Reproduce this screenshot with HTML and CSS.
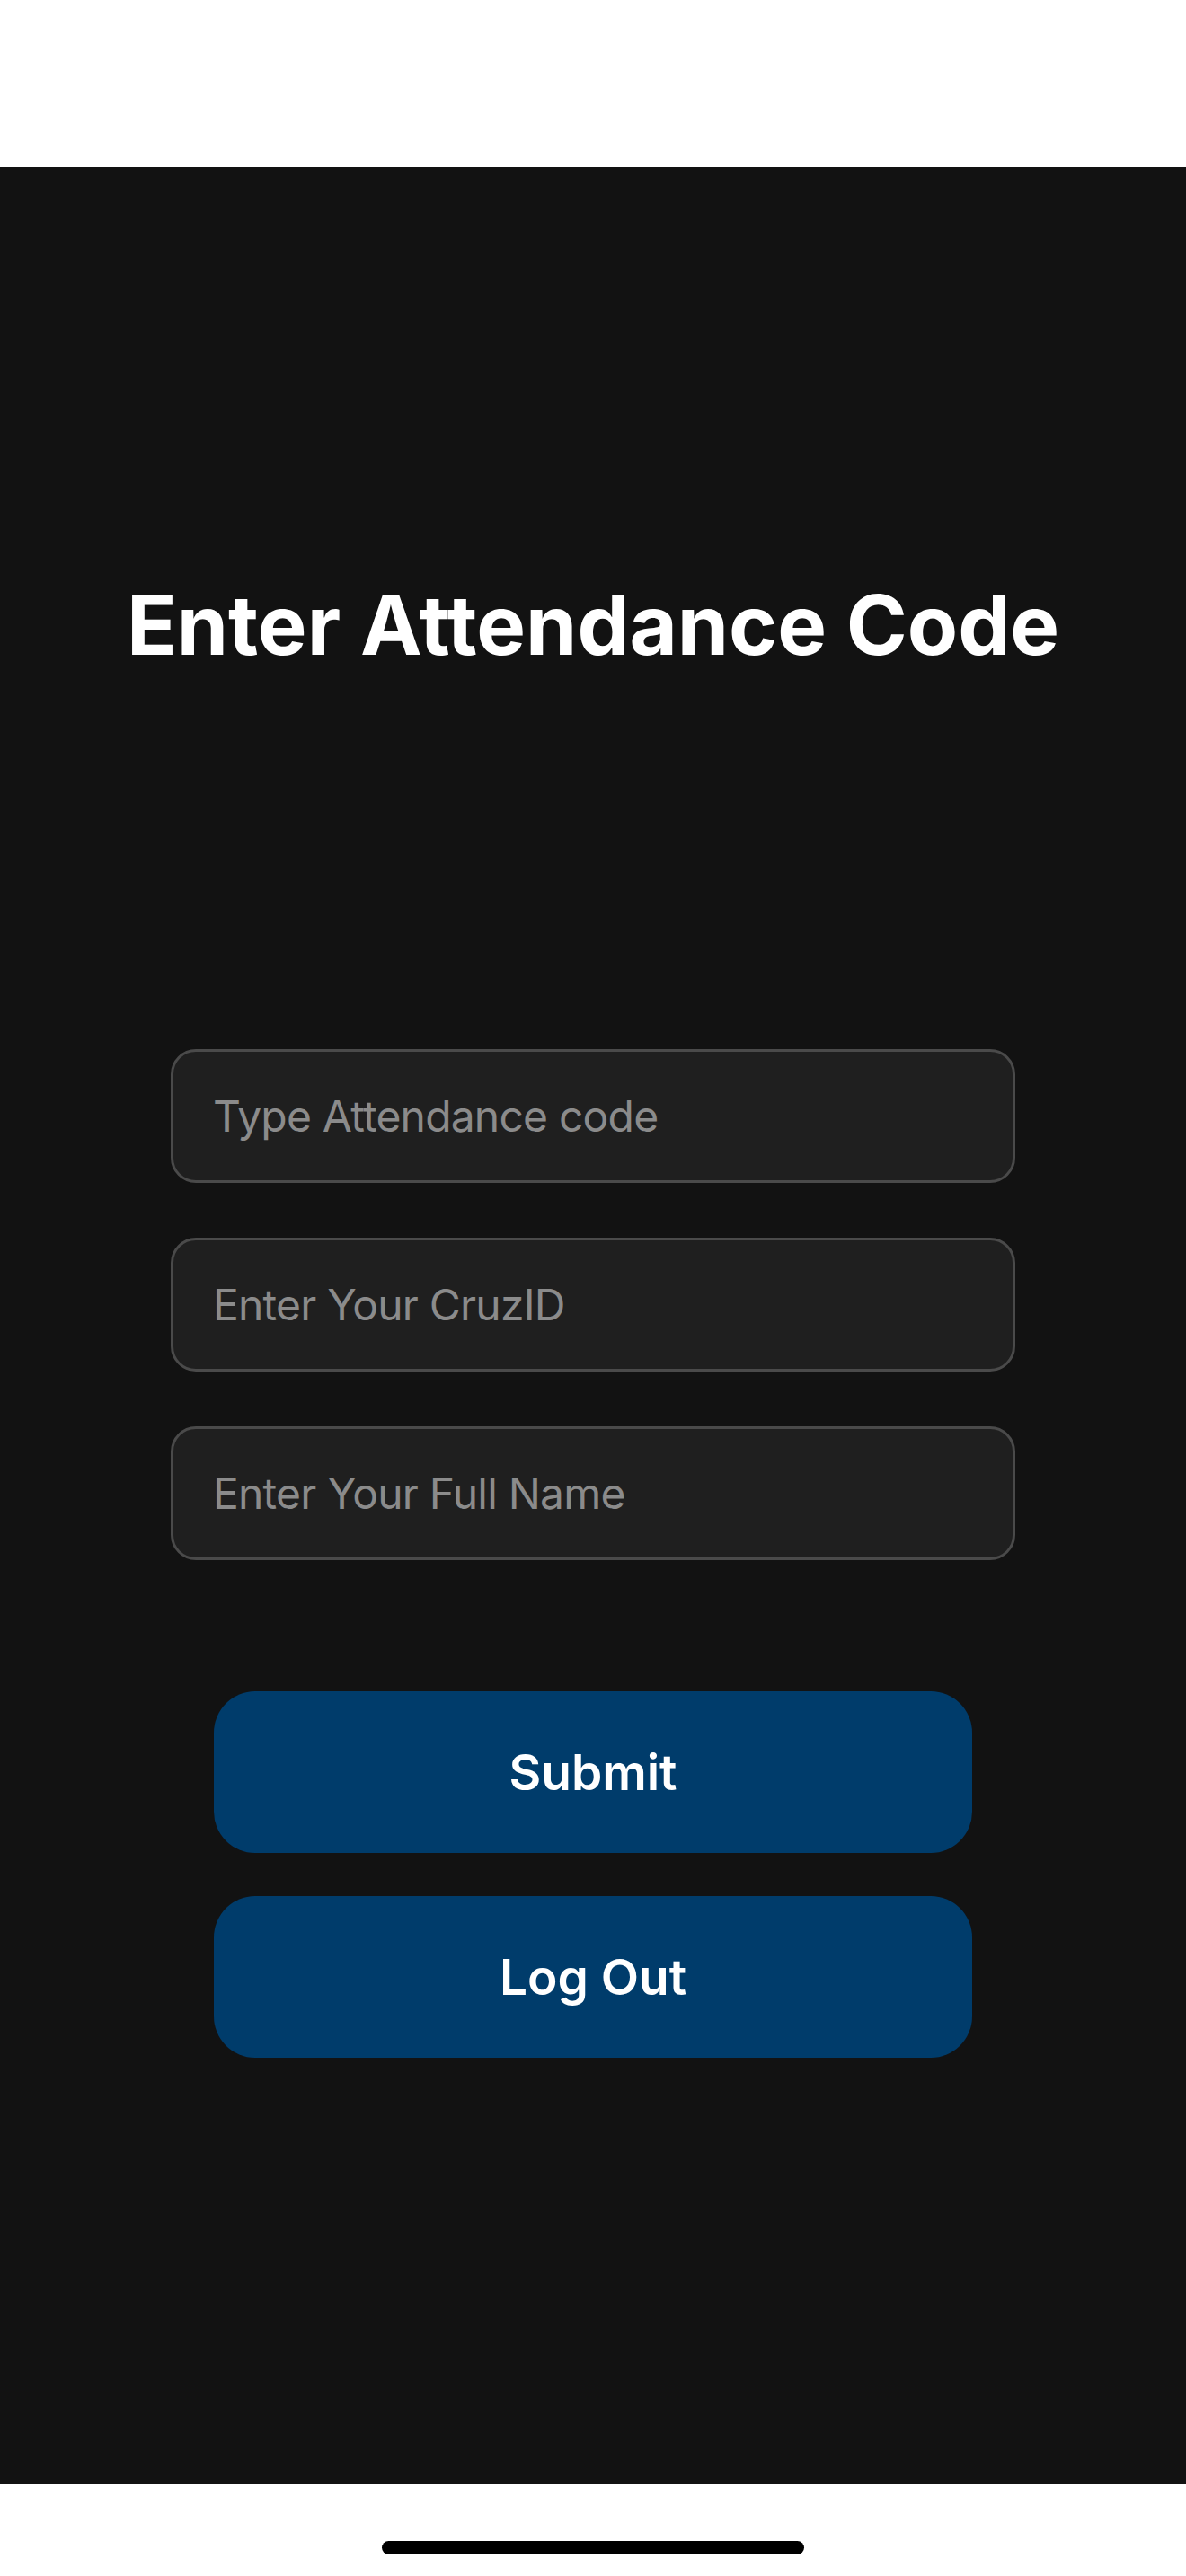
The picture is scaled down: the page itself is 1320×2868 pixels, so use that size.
FILE: index.html
```html
<!DOCTYPE html>
<html lang="en">
<head>
  <meta charset="UTF-8">
  <title>Enter Attendance Code</title>
  <link rel="stylesheet" href="styles.css">
</head>
<body>

<div class="top-bar"></div>

<main class="screen">
  <h1 class="title">Enter Attendance Code</h1>

  <div class="fields">
    <input type="text" class="field" id="code" placeholder="Type Attendance code">
    <input type="text" class="field" id="cruzid" placeholder="Enter Your CruzID">
    <input type="text" class="field" id="fullname" placeholder="Enter Your Full Name">
  </div>

  <div class="actions">
    <button class="btn" onclick="submitCode()">Submit</button>
    <button class="btn" onclick="logOut()">Log Out</button>
  </div>
</main>

<div class="bottom-bar">
  <div class="home-indicator"></div>
</div>

<script>
function submitCode() {
  const code = document.getElementById('code').value;
  const cruzid = document.getElementById('cruzid').value;
  const name = document.getElementById('fullname').value;

  if (code === '' || cruzid === '' || name === '') {
    alert('Please fill all fields!');
    return;
  }
  alert('Attendance submitted!');
}

function logOut() {
  localStorage.removeItem('loggedIn');
}
</script>

</body>
</html>
```

FILE: styles.css
```css
body { margin: 0; background-color: #fff; font-family: Inter, "Noto Sans", sans-serif; }
.top-bar { height: 186px; background-color: #fff; }
.screen { height: 2580px; box-sizing: border-box; padding-top: 455px; background-color: #121212; display: flex; flex-direction: column; align-items: center; }
.title { margin: 0; font-size: 92px; line-height: 110px; font-weight: 700; color: #fff; text-align: center; }
.fields { margin-top: 417px; width: 940px; display: flex; flex-direction: column; gap: 61px; }
.field { box-sizing: border-box; width: 100%; height: 149px; padding: 0 44px; background-color: #1f1f1f; color: #fff; border: 3px solid #4a4a4a; border-radius: 28px; font-family: Inter, "Noto Sans", sans-serif; font-size: 48px; letter-spacing: -0.8px; outline: none; }
.field::placeholder { color: #8b8b8b; }
.actions { margin-top: 146px; width: 844px; display: flex; flex-direction: column; gap: 48px; }
.btn { height: 180px; border: none; border-radius: 46px; background-color: #003c6b; color: #fff; font-family: Inter, "Noto Sans", sans-serif; font-size: 55px; font-weight: 600; cursor: pointer; }
.bottom-bar { height: 102px; display: flex; justify-content: center; background-color: #fff; }
.home-indicator { margin-top: 63px; width: 470px; height: 15px; border-radius: 8px; background-color: #000; }
```
